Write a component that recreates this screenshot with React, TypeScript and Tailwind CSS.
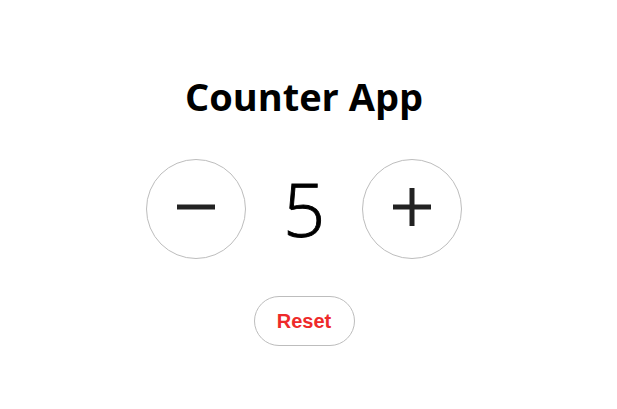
import React, { useState } from "react";

export default function App() {
  const [count, setCount] = useState(5);
  return (
    <div className="w-[608px] h-[409px] bg-white flex flex-col items-center pt-[69px]">
      <h1 className="font-['Open_Sans',sans-serif] font-bold text-[38px] leading-[55px] text-black m-0">
        Counter App
      </h1>
      <div className="flex items-center gap-[40px] mt-[35px]">
        <button
          onClick={() => setCount(count - 1)}
          className="w-[100px] h-[100px] rounded-full border border-[#bdbdbd] bg-white flex items-center justify-center"
        >
          <svg width="38" height="6" viewBox="0 0 38 6" className="-mt-[4px]">
            <rect x="0" y="0.5" width="38" height="5" fill="#222" />
          </svg>
        </button>
        <div className="w-[36px] flex justify-center font-['Open_Sans',sans-serif] font-light [-webkit-text-stroke:0.9px_black] text-[74px] leading-[100px] text-black">
          {count}
        </div>
        <button
          onClick={() => setCount(count + 1)}
          className="w-[100px] h-[100px] rounded-full border border-[#bdbdbd] bg-white flex items-center justify-center"
        >
          <svg width="38" height="38" viewBox="0 0 38 38" className="-mt-[4px]">
            <rect x="0" y="16.5" width="38" height="5" fill="#222" />
            <rect x="16.5" y="0" width="5" height="38" fill="#222" />
          </svg>
        </button>
      </div>
      <button
        onClick={() => setCount(0)}
        className="mt-[37px] w-[101px] h-[50px] rounded-full border border-[#bdbdbd] bg-white font-['Liberation_Sans',Arial,sans-serif] font-bold text-[20px] text-[#ee2a2a]"
      >
        Reset
      </button>
    </div>
  );
}
